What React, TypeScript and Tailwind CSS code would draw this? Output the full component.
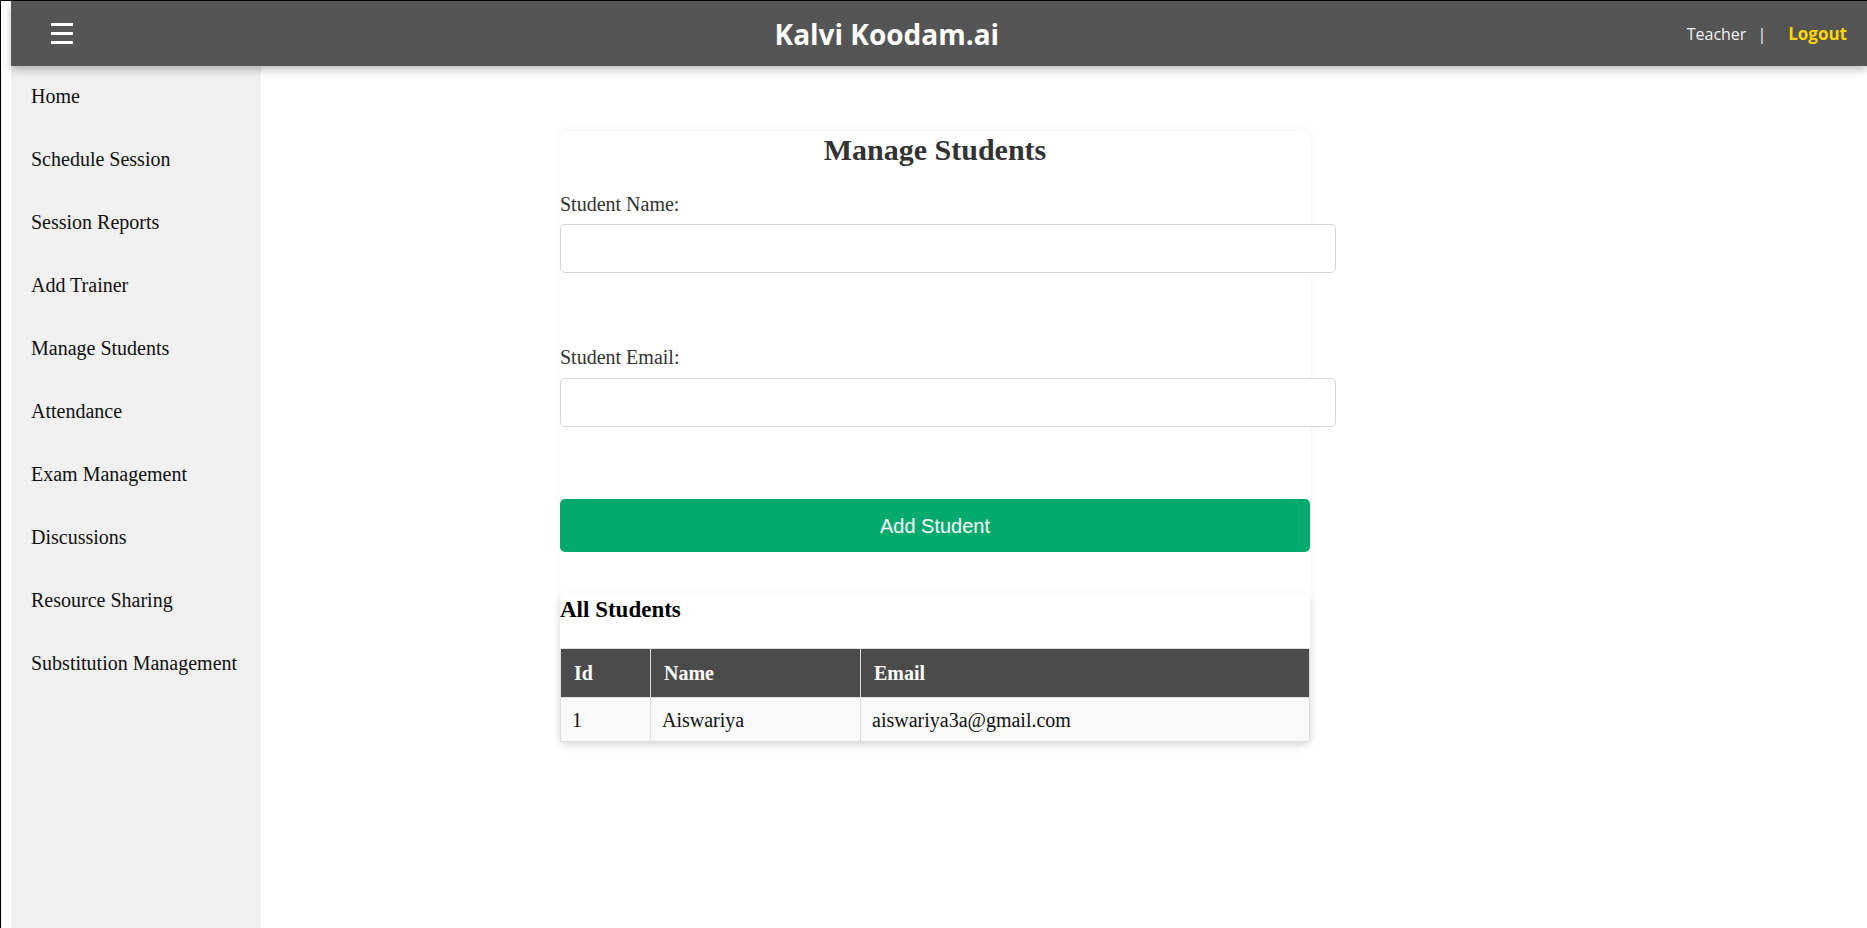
import React from "react";

const navItems = [
  "Home",
  "Schedule Session",
  "Session Reports",
  "Add Trainer",
  "Manage Students",
  "Attendance",
  "Exam Management",
  "Discussions",
  "Resource Sharing",
  "Substitution Management",
];

const serif = { fontFamily: '"Liberation Serif", "Times New Roman", serif' };
const sans = { fontFamily: '"Open Sans", "Noto Sans", sans-serif' };

export default function App() {
  return (
    <div
      className="h-[928px] w-full overflow-hidden border-l border-t border-black bg-white pl-[10px] flex flex-col"
      style={serif}
    >
      <header
        className="relative z-10 h-[65px] shrink-0 bg-[#555555] flex items-center justify-between pl-[40px] pr-[20px] shadow-[0_4px_8px_rgba(0,0,0,0.25)]"
        style={sans}
      >
        <div className="flex flex-col gap-[6px] w-[22px]">
          <div className="h-[3px] bg-white" />
          <div className="h-[3px] bg-white" />
          <div className="h-[3px] bg-white" />
        </div>
        <div className="text-white font-bold text-[28px] leading-none pl-[14px]">Kalvi Koodam.ai</div>
        <div className="flex items-center text-[16px] text-[#f2f2f2]">
          <span>Teacher</span>
          <span className="ml-[11px] mr-[22px]">|</span>
          <span className="font-bold text-[17px] text-[#ffd700]">Logout</span>
        </div>
      </header>

      <div className="flex flex-1 min-h-0">
        <aside className="w-[250px] shrink-0 bg-[#f0f0f0]">
          <ul>
            {navItems.map((item) => (
              <li
                key={item}
                className="h-[63px] pl-[20px] pt-[19px] text-[20px] leading-[22px] text-[#111]"
              >
                {item}
              </li>
            ))}
          </ul>
        </aside>

        <main className="flex-1">
          <div className="ml-[299px] mt-[65px] w-[750px] rounded-lg bg-white shadow-[0_0_10px_rgba(0,0,0,0.06)]">
            <h2 className="pt-[2px] text-center text-[30px] leading-[34px] font-bold text-[#333]">
              Manage Students
            </h2>

            <label className="mt-[26px] block text-[20px] leading-[22px] text-[#333]">Student Name:</label>
            <input
              type="text"
              className="mt-[9px] block h-[49px] w-[776px] rounded-[5px] border border-[#d4d4d4] bg-white px-3 outline-none"
            />

            <label className="mt-[73px] block text-[20px] leading-[22px] text-[#333]">Student Email:</label>
            <input
              type="email"
              className="mt-[10px] block h-[49px] w-[776px] rounded-[5px] border border-[#d4d4d4] bg-white px-3 outline-none"
            />

            <button
              className="mt-[72px] block h-[53px] w-full rounded-[5px] bg-[#04a96d] text-[20px] text-white"
              style={{ fontFamily: '"Liberation Sans", Arial, sans-serif' }}
            >
              Add Student
            </button>

            <div className="mt-[41px] rounded-lg bg-white shadow-[0_4px_8px_rgba(0,0,0,0.12)]">
              <h3 className="pt-[4px] text-[23px] leading-[26px] font-bold text-black">All Students</h3>
              <table className="mt-[25px] w-full border-collapse text-[20px]">
                <thead>
                  <tr className="bg-[#4a4b4a] text-white">
                    <th className="h-[49px] w-[90px] border border-[#dddddd] pl-[13px] text-left font-bold">Id</th>
                    <th className="h-[49px] w-[210px] border border-[#dddddd] pl-[13px] text-left font-bold">Name</th>
                    <th className="h-[49px] border border-[#dddddd] pl-[13px] text-left font-bold">Email</th>
                  </tr>
                </thead>
                <tbody>
                  <tr className="bg-[#f9f9f9] text-[#111]">
                    <td className="h-[44px] border border-[#dddddd] pl-[11px]">1</td>
                    <td className="h-[44px] border border-[#dddddd] pl-[11px]">Aiswariya</td>
                    <td className="h-[44px] border border-[#dddddd] pl-[11px]">aiswariya3a@gmail.com</td>
                  </tr>
                </tbody>
              </table>
            </div>
          </div>
        </main>
      </div>
    </div>
  );
}
